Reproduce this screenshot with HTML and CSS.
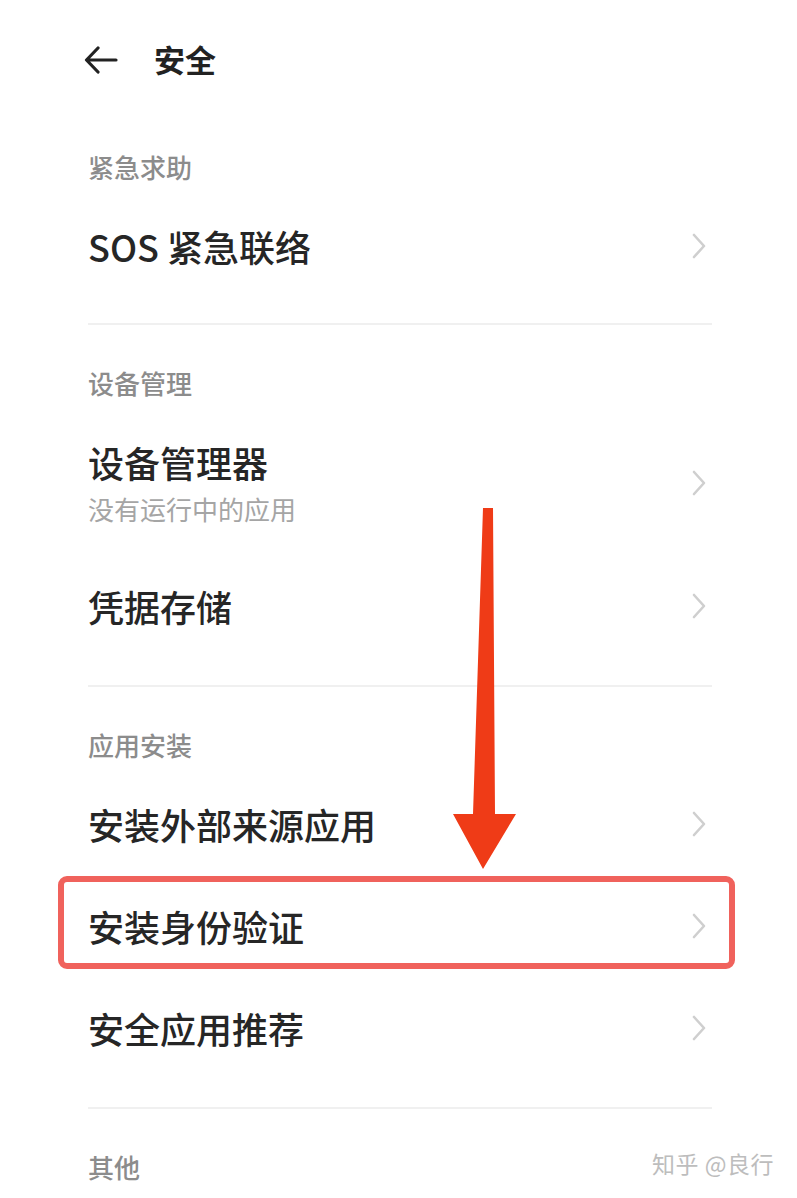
FILE: index.html
```html
<!DOCTYPE html>
<html lang="zh-CN">
<head>
<meta charset="utf-8">
<title>安全</title>
<link rel="stylesheet" href="styles.css">
</head>
<body>
<div class="page">
  <header class="topbar">
    <svg class="back" width="34" height="28" viewBox="0 0 34 28"><path d="M32 14H3M14 2L2.5 14L14 26" fill="none" stroke="#222" stroke-width="3.2" stroke-linecap="round" stroke-linejoin="round"/></svg>
    <h1 class="title">安全</h1>
  </header>

  <section class="group first">
    <div class="label">紧急求助</div>
    <div class="row"><span class="row-title">SOS 紧急联络</span><svg class="chev" width="16" height="28" viewBox="0 0 16 28"><path d="M3 3L13 14L3 25" fill="none" stroke="#cfcfcf" stroke-width="2.6" stroke-linecap="round" stroke-linejoin="round"/></svg></div>
  </section>
  <div class="divider"></div>

  <section class="group">
    <div class="label">设备管理</div>
    <div class="row tall"><div class="texts"><span class="row-title">设备管理器</span><span class="row-sub">没有运行中的应用</span></div><svg class="chev" width="16" height="28" viewBox="0 0 16 28"><path d="M3 3L13 14L3 25" fill="none" stroke="#cfcfcf" stroke-width="2.6" stroke-linecap="round" stroke-linejoin="round"/></svg></div>
    <div class="row"><span class="row-title">凭据存储</span><svg class="chev" width="16" height="28" viewBox="0 0 16 28"><path d="M3 3L13 14L3 25" fill="none" stroke="#cfcfcf" stroke-width="2.6" stroke-linecap="round" stroke-linejoin="round"/></svg></div>
  </section>
  <div class="divider"></div>

  <section class="group">
    <div class="label">应用安装</div>
    <div class="row"><span class="row-title">安装外部来源应用</span><svg class="chev" width="16" height="28" viewBox="0 0 16 28"><path d="M3 3L13 14L3 25" fill="none" stroke="#cfcfcf" stroke-width="2.6" stroke-linecap="round" stroke-linejoin="round"/></svg></div>
    <div class="row marked"><span class="row-title">安装身份验证</span><svg class="chev" width="16" height="28" viewBox="0 0 16 28"><path d="M3 3L13 14L3 25" fill="none" stroke="#cfcfcf" stroke-width="2.6" stroke-linecap="round" stroke-linejoin="round"/></svg><div class="highlight"></div></div>
    <div class="row"><span class="row-title">安全应用推荐</span><svg class="chev" width="16" height="28" viewBox="0 0 16 28"><path d="M3 3L13 14L3 25" fill="none" stroke="#cfcfcf" stroke-width="2.6" stroke-linecap="round" stroke-linejoin="round"/></svg></div>
  </section>
  <div class="divider"></div>

  <section class="group">
    <div class="label">其他</div>
  </section>

  <svg class="arrow" width="797" height="1198" viewBox="0 0 797 1198"><path d="M483 508L493 508L495 814L516 814L483 869L453 814L473 814Z" fill="#ef3b17"/></svg>
  <div class="watermark">知乎 @良行</div>
</div>
</body>
</html>
```

FILE: styles.css
```css
html, body {
  margin: 0;
  padding: 0;
  background: #ffffff;
}

body {
  font-family: "Noto Sans CJK SC", "Noto Sans", sans-serif;
  color: #222;
}

.page {
  position: relative;
  width: 797px;
  height: 1198px;
  overflow: hidden;
}

.topbar {
  height: 120px;
  display: flex;
  align-items: center;
  padding-left: 84px;
  gap: 36px;
}

.back {
  display: block;
}

.title {
  margin: 0;
  font-size: 31px;
  font-weight: 700;
  color: #222;
  line-height: 1;
  margin-top: -4px;
}

.group {
  padding: 43px 85px 28px 88px;
}

.group.first {
  padding-top: 32px;
  padding-bottom: 26px;
}

.label {
  font-size: 26px;
  line-height: 30px;
  color: #8c8c8c;
  font-weight: 500;
  margin-bottom: 13px;
}

.row {
  position: relative;
  height: 102px;
  display: flex;
  align-items: center;
  justify-content: space-between;
}

.row.tall {
  height: 144px;
  align-items: flex-start;
}

.row.tall .chev {
  margin-top: 58px;
}

.texts {
  display: flex;
  flex-direction: column;
  padding-top: 33px;
  gap: 14px;
}

.row-title {
  font-size: 36px;
  line-height: 36px;
  font-weight: 500;
  color: #262626;
}

.row-sub {
  font-size: 26px;
  line-height: 30px;
  color: #a5a5a5;
}

.chev {
  display: block;
  margin-right: 5px;
}

.divider {
  height: 2px;
  margin: 0 85px 0 88px;
  background: #f0f0f0;
}

.highlight {
  position: absolute;
  left: -30px;
  top: 1px;
  width: 677px;
  height: 93px;
  box-sizing: border-box;
  border: 6px solid #f0625c;
  border-radius: 9px;
  pointer-events: none;
}

.arrow {
  position: absolute;
  left: 0;
  top: 0;
  pointer-events: none;
}

.watermark {
  position: absolute;
  left: 652px;
  top: 1149px;
  font-size: 23px;
  line-height: 28px;
  color: #bdbdbd;
  letter-spacing: 0.5px;
}
```
